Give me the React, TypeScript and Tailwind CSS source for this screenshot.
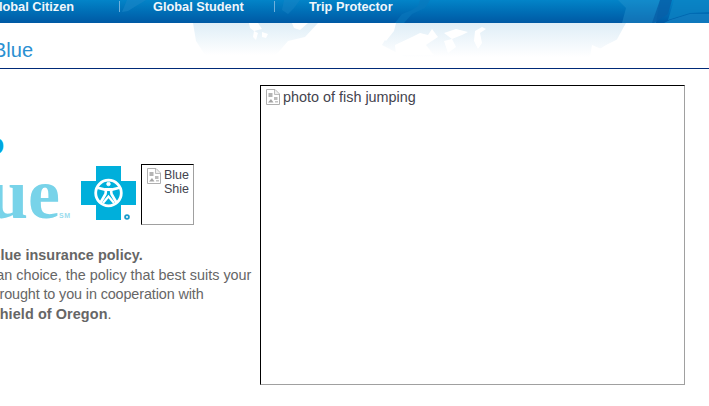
const arial = "font-['Liberation_Sans',Arial,sans-serif]";

function BrokenIcon() {
  return (
    <svg width="14" height="16" viewBox="0 0 14 16" className="shrink-0">
      <path d="M0.5 0.5H9L13.5 5V15.5H0.5Z" fill="#fff" stroke="#b0b0b0" />
      <path d="M8.5 1V5.5H13" fill="#eee" stroke="#bdbdbd" />
      <rect x="2.5" y="4" width="4" height="4" fill="#b4b4b4" />
      <rect x="8" y="8" width="3.5" height="3" fill="#bcbcbc" />
      <path d="M2 13.5L5 10L7.5 13.5Z" fill="#a4a4a4" />
      <rect x="9" y="12" width="3" height="1.5" fill="#c4c4c4" />
    </svg>
  );
}

function BrokenImage({ alt, className, textClass }: { alt: string; className: string; textClass: string }) {
  return (
    <div className={`flex items-start overflow-hidden border border-t-black border-l-black border-r-[#a0a0a0] border-b-[#a0a0a0] bg-white ${className}`}>
      <BrokenIcon />
      <div className="ml-[3px] min-w-0 flex-1 overflow-hidden">
        <span className={`block text-[#44444e] ${textClass}`}>{alt}</span>
      </div>
    </div>
  );
}

function BlueCross() {
  return (
    <svg width="55" height="56" viewBox="0 0 55 56" className="shrink-0">
      <path d="M15 0H40V15H55V39H40V54H15V39H0V15H15Z" fill="#00afdb" />
      <g fill="none" stroke="#fff">
        <circle cx="27.5" cy="27" r="12.8" strokeWidth="2.8" />
        <circle cx="27.5" cy="18" r="1.8" fill="#fff" strokeWidth="0.8" />
        <path d="M15.5 21.5L24 23.5H31L39.5 21.5" strokeWidth="2.8" />
        <path d="M25 24L24.5 28L19 37.5M30 24L30.5 28L36 37.5" strokeWidth="2.6" />
        <path d="M22 37L27.5 30.5L33 37" strokeWidth="2.2" />
      </g>
      <circle cx="46" cy="51" r="2.8" fill="#1a9ccc" />
      <circle cx="46" cy="51" r="1" fill="#fff" />
    </svg>
  );
}

function NavMap() {
  return (
    <svg width="709" height="23" viewBox="0 0 709 23" className="absolute inset-0">
      <path d="M127 0H146L136 6L128 11L122 12Z" fill="#1a86c6" opacity="0.6" />
      <path d="M284 0H300L294 8L288 14L282 10Z" fill="#1a86c6" opacity="0.45" />
      <path d="M395 23L402 14L412 10L418 6L420 0H430L425 8L412 14L404 23Z" fill="#0a78bc" opacity="0.6" />
      <path d="M622 23L626 8L618 0H660L656 23Z" fill="#2a96cf" opacity="0.4" />
      <path d="M660 0H672L668 14L654 23H652Z" fill="#075fa8" opacity="0.8" />
      <path d="M674 0H709V12L690 13L668 20Z" fill="#0c84c4" opacity="0.75" />
      <path d="M670 20L690 14L709 14V23H664Z" fill="#1684c6" opacity="0.7" />
    </svg>
  );
}

function SubMap() {
  return (
    <svg width="709" height="45" viewBox="0 0 709 45" className="absolute inset-0">
      <defs>
        <linearGradient id="fade" x1="0" y1="0" x2="0" y2="1">
          <stop offset="0" stopColor="#dfeef7" />
          <stop offset="1" stopColor="#ffffff" />
        </linearGradient>
      </defs>
      <path d="M193 0H318L305 14L288 18L276 32H205L196 18Z" fill="url(#fade)" />
      <path d="M395 0H626L615 20L590 34H405L382 22Z" fill="url(#fade)" />
      <g fill="#fff">
        <path d="M249 0H258L262 6L254 8L250 5Z" />
        <path d="M254 8L258 10L256 17L253 14Z" />
        <path d="M262 9L268 11L266 15L262 14Z" />
        <path d="M292 0H308L300 7L294 5Z" />
        <path d="M380 0H396L394 8L386 18L380 12Z" />
        <path d="M395 22L412 14L420 10L428 12L432 6L438 14L426 22L434 32H396Z" />
        <path d="M444 18L452 16L456 24L448 30Z" />
        <path d="M444 10L456 6L468 9L462 12L452 16Z" />
        <path d="M475 8L482 4L486 6L480 10L482 20L478 26L474 18Z" />
        <path d="M590 32L606 22L618 16L624 4L628 0L632 2L614 24L606 36Z" />
        <path d="M592 22L606 28L598 34H590Z" />
      </g>
    </svg>
  );
}

export default function App() {
  return (
    <div className={`relative h-[406px] w-[709px] overflow-hidden bg-white ${arial}`}>
      <header className="relative h-[23px] bg-gradient-to-b from-[#0384c8] to-[#0059a4]">
        <NavMap />
        <nav className="relative flex h-[13px] items-center text-[12.75px] font-bold leading-[13px] text-[#f0f6fb]">
          <span className="ml-[-11px] w-[130px] whitespace-nowrap">Global Citizen</span>
          <span className="h-[11px] w-px bg-[#6fb0dc]" />
          <span className="ml-[33px] w-[121px] whitespace-nowrap">Global Student</span>
          <span className="h-[11px] w-px bg-[#6fb0dc]" />
          <span className="ml-[34px] whitespace-nowrap">Trip Protector</span>
        </nav>
      </header>

      <div className="relative h-[46px] border-b border-[#002a78]">
        <SubMap />
        <h1 className="relative ml-[-7px] pt-[15px] text-[20px] font-normal leading-[24px] text-[#2a90d2]">Blue</h1>
      </div>

      <main className="flex pt-[16px]">
        <section className="w-[260px] shrink-0">
          <div className="ml-[-14px] mt-[38px] h-[41px] text-[30px] font-bold leading-[41px] text-[#00a7df]">o</div>
          <div className="flex items-start">
            <div className="ml-[-60px] flex w-[141px] shrink-0 items-baseline overflow-hidden pt-[1px]">
              <span className="font-['Liberation_Serif',serif] text-[72px] font-bold leading-[58px] text-[#78d3e9]">Bue</span>
              <span className="ml-[-1px] text-[7px] font-bold leading-[7px] tracking-[0.5px] text-[#9adcee]">SM</span>
            </div>
            <div className="pt-[2px]">
              <BlueCross />
            </div>
            <BrokenImage
              alt="Blue Shield"
              textClass="w-[40px] text-[12.5px] leading-[14px]"
              className="ml-[5px] h-[61px] w-[53px] pl-[5px] pr-[4px] pt-[3px]"
            />
          </div>
          <div className="mt-[21px] whitespace-nowrap text-[14.4px] leading-[19.7px] text-[#666]">
            <p className="ml-[-10px] font-bold tracking-[0.05px]">Blue insurance policy.</p>
            <p className="ml-[-15px]">plan choice, the policy that best suits your</p>
            <p className="ml-[-10px] tracking-[-0.12px]">Brought to you in cooperation with</p>
            <p className="ml-[-10px] tracking-[0.1px]">
              <b>Shield of Oregon</b>.
            </p>
          </div>
        </section>
        <BrokenImage
          alt="photo of fish jumping"
          textClass="text-[14.4px] leading-[16px]"
          className="h-[300px] w-[425px] pl-[5px] pt-[3px]"
        />
      </main>
    </div>
  );
}
